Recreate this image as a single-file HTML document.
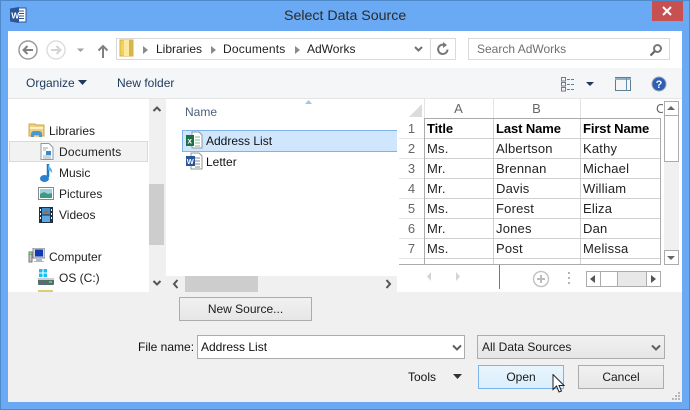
<!DOCTYPE html>
<html><head><meta charset="utf-8"><style>
html,body{margin:0;padding:0}
body{width:690px;height:410px;overflow:hidden;position:relative;background:#6aaaf4;font-family:"Liberation Sans",sans-serif;font-size:12px;color:#1a1a1a}
div,span,svg{position:absolute;box-sizing:border-box}
.t{white-space:nowrap;line-height:16px}
.n{color:#1e1e1e;font-size:12px;letter-spacing:0}
.c{font-size:13px;color:#222;letter-spacing:.2px}
.b{font-weight:bold;color:#000;font-size:13px;letter-spacing:-.1px}
.h{color:#666;font-size:13px;text-align:center}
.g{background:#d0d0d0}
.btn{background:linear-gradient(#f1f1f1,#e6e6e6);border:1px solid #acacac;text-align:center;line-height:22px;letter-spacing:0;color:#1a1a1a}
</style></head><body>
<div style="left:0;top:0;width:690px;height:410px;border:1px solid #4d88c9"></div>
<div class="t" style="left:284px;top:7px;font-size:14.2px;line-height:18px;color:#2a2a2a">Select Data Source</div>
<svg style="left:9px;top:6px" width="18" height="18" viewBox="0 0 18 18"><rect x="7" y="2" width="10" height="14" fill="#fff" stroke="#2a5699" stroke-width="1"/><path d="M10 5h5M10 7.500h5M10 10h5M10 12.500h5" stroke="#2a5699"/><path d="M1 2.500L10 1v16L1 15.500z" fill="#2a5699"/><text x="2.200" y="12.500" font-size="8.500" font-weight="bold" fill="#fff" font-family="Liberation Sans">W</text></svg>
<div style="left:652px;top:1px;width:31px;height:20px;background:#c75050"></div>
<svg style="left:661px;top:5px" width="12" height="12"><path d="M2 2l8 8M10 2l-8 8" stroke="#fff" stroke-width="2"/></svg>

<!-- client -->
<div style="left:8px;top:31px;width:674px;height:371px;background:#f0f0f0"></div>
<div style="left:8px;top:31px;width:674px;height:37px;background:#fff"></div>
<div style="left:8px;top:68px;width:674px;height:30px;background:#f5f6f7"></div>
<div style="left:8px;top:98px;width:674px;height:1px;background:#e4e5e7"></div>

<!-- nav -->
<svg style="left:17px;top:38px" width="106" height="24" viewBox="0 0 106 24" fill="none">
<circle cx="11" cy="12" r="9" stroke="#9a9a9a" stroke-width="1.500"/><path d="M16 12H7M10.500 8L6.500 12l4 4" stroke="#808080" stroke-width="2"/>
<circle cx="39" cy="12" r="9" stroke="#dedede" stroke-width="1.500"/><path d="M34 12h9M39.500 8l4 4-4 4" stroke="#d4d4d4" stroke-width="2"/>
<path d="M60 10.500h7l-3.500 3.500z" fill="#a0a0a0"/>
<path d="M86 20V8M81.500 12.500L86 8l4.500 4.500" stroke="#808080" stroke-width="2"/></svg>
<div style="left:116px;top:38px;width:340px;height:22px;border:1px solid #d9d9d9;background:#fff"></div>
<div style="left:430px;top:38px;width:1px;height:22px;background:#d9d9d9"></div>
<svg style="left:119px;top:39px" width="16" height="19" viewBox="0 0 16 19"><rect x="1" y="1" width="13" height="16" fill="#f0d060" stroke="#d7b040"/><rect x="5" y="1" width="5" height="16" fill="#fbe9a0"/><rect x="10" y="1" width="4" height="16" fill="#d9b44a"/></svg>
<svg style="left:142px;top:44px" width="300" height="12"><path d="M1 2l5 4-5 4zM69 2l5 4-5 4zM153 2l5 4-5 4z" fill="#8a8a8a"/><path d="M273 3l3.500 3.500L280 3" stroke="#707070" stroke-width="2" fill="none"/></svg>
<div class="t n" style="left:156px;top:41px">Libraries</div>
<div class="t n" style="left:223px;top:41px;letter-spacing:.2px">Documents</div>
<div class="t n" style="left:307px;top:41px">AdWorks</div>
<svg style="left:436px;top:42px" width="14" height="14" fill="none"><path d="M11.500 7.500A4.700 4.700 0 1 1 8 2.800" stroke="#777" stroke-width="2"/><path d="M7 0v6l4-3z" fill="#777"/></svg>
<div style="left:468px;top:38px;width:202px;height:22px;border:1px solid #d9d9d9;background:#fff"></div>
<div class="t" style="left:477px;top:41px;color:#707070">Search AdWorks</div>
<svg style="left:649px;top:43px" width="14" height="14" fill="none"><circle cx="8.500" cy="5.500" r="3.500" stroke="#777" stroke-width="2"/><path d="M6 8l-4.500 4.500" stroke="#666" stroke-width="2.200"/></svg>

<!-- toolbar -->
<div class="t" style="left:26px;top:75px;color:#1e395b">Organize</div>
<svg style="left:78px;top:80px" width="10" height="6"><path d="M0 0h9L4.500 5z" fill="#1e395b"/></svg>
<div class="t" style="left:117px;top:75px;color:#1e395b">New folder</div>
<svg style="left:560px;top:76px" width="100" height="18" fill="none">
<rect x="1.500" y="1.500" width="4" height="3.500" stroke="#778"/><rect x="1.500" y="6.500" width="4" height="3.500" stroke="#778"/><rect x="1.500" y="11.500" width="4" height="3.500" stroke="#778"/>
<path d="M7 3.500h8M7 8.500h8M7 13.500h8" stroke="#5d7fa0" stroke-dasharray="3 1"/>
<path d="M26 6h8l-4 4z" fill="#1e395b"/>
<rect x="55.500" y="1.500" width="15" height="13" stroke="#5f7f8f"/><path d="M55 2h16v2H55z" fill="#8fb0c0"/><path d="M66.500 2v13" stroke="#5f8faf"/></svg>
<svg style="left:651px;top:76px" width="16" height="16"><circle cx="8" cy="8" r="7" fill="#2e5fb4" stroke="#9aa5b5"/><text x="8" y="12" text-anchor="middle" font-size="11" font-weight="bold" fill="#fff" font-family="Liberation Sans">?</text></svg>

<!-- nav pane -->
<div style="left:8px;top:99px;width:141px;height:193px;background:#fff"></div>
<div style="left:149px;top:99px;width:15px;height:193px;background:#f0f0f0"></div>
<div style="left:149px;top:184px;width:15px;height:61px;background:#cdcdcd"></div>
<svg style="left:152px;top:105px" width="10" height="183" fill="none"><path d="M1.500 6L5 2.500 8.500 6M1.500 176L5 179.500 8.500 176" stroke="#555" stroke-width="2"/></svg>
<div style="left:9px;top:141px;width:139px;height:21px;background:#f2f2f2;border:1px solid #dadada"></div>
<svg style="left:28px;top:122px" width="17" height="17" viewBox="0 0 17 17"><path d="M1 2h6l1 1h8v11H1z" fill="#f0d080" stroke="#c8a850"/><path d="M2 5h13v2H2z" fill="#fdf2c0"/><path d="M3 15v-3a3 3 0 0 1 3-3h5a3 3 0 0 1 3 3v3h-3v-2H6v2z" fill="#4a9ad0"/></svg>
<div class="t n" style="left:49px;top:123px">Libraries</div>
<svg style="left:40px;top:143px" width="14" height="17" viewBox="0 0 14 17"><path d="M1 .5h8l4 4v12H1z" fill="#fff" stroke="#8a99a8"/><path d="M3 5h5M3 7h3M3 13h8M3 15h8" stroke="#9aa"/><rect x="6" y="8" width="5" height="4" fill="#3a8ac8"/></svg>
<div class="t n" style="left:59px;top:144px;letter-spacing:.2px">Documents</div>
<svg style="left:39px;top:163px" width="15" height="20" viewBox="0 0 15 20"><path d="M9 1v13" stroke="#1e78c8" stroke-width="2.500"/><ellipse cx="5.500" cy="15.500" rx="4.500" ry="3.500" fill="#2a80d0"/><path d="M9 1c1 4 5 4 4 9-1-2-3-3-4-3z" fill="#5ab0e8"/></svg>
<div class="t n" style="left:59px;top:165px">Music</div>
<svg style="left:38px;top:187px" width="16" height="13" viewBox="0 0 16 13"><rect x=".5" y=".5" width="15" height="12" fill="#fff" stroke="#888"/><rect x="2" y="2" width="12" height="9" fill="#9fd0e0"/><path d="M2 7l4-2 4 2 4-1v5H2z" fill="#3f9a80"/></svg>
<div class="t n" style="left:59px;top:186px">Pictures</div>
<svg style="left:39px;top:207px" width="14" height="16" viewBox="0 0 14 16"><rect width="14" height="16" fill="#203040"/><rect x="3" y="1" width="8" height="6.500" fill="#3a90d0"/><rect x="3" y="8.500" width="8" height="6.500" fill="#60a8e0"/><path d="M4 6l3-3 3 3z" fill="#a56a40"/><path d="M1 2h1v2H1zM1 6h1v2H1zM1 10h1v2H1zM12 2h1v2h-1zM12 6h1v2h-1zM12 10h1v2h-1z" fill="#fff"/></svg>
<div class="t n" style="left:59px;top:207px">Videos</div>
<svg style="left:28px;top:248px" width="17" height="16" viewBox="0 0 17 16"><rect x="5" y="0" width="12" height="10" fill="#d0d8e0" stroke="#808890"/><rect x="7" y="1.500" width="8" height="7" fill="#1438b0"/><rect x="1" y="4" width="3" height="10" fill="#c0c8c8" stroke="#777"/><path d="M8 11h6v2h2v1H6v-1h2z" fill="#b0b8c0"/><rect x="1.500" y="6" width="2" height="1" fill="#4c4"/></svg>
<div class="t n" style="left:49px;top:249px">Computer</div>
<svg style="left:38px;top:269px" width="16" height="17" viewBox="0 0 16 17"><path d="M1 0h3.500v3.500H1zM5.500 0H9v3.500H5.500zM1 4.500h3.500V8H1zM5.500 4.500H9V8H5.500z" fill="#14c0f0"/><rect y="10" width="16" height="6" rx="1" fill="#5a6a72"/><rect x="0" y="9" width="16" height="2" fill="#c8d0d0"/><rect x="11" y="12" width="3" height="2" fill="#5c5"/></svg>
<div class="t n" style="left:59px;top:270px">OS (C:)</div>
<div style="left:38px;top:290px;width:15px;height:2px;background:#e8c878"></div>

<!-- file pane -->
<div style="left:166px;top:99px;width:232px;height:193px;background:#fff"></div>
<div style="left:166px;top:276px;width:231px;height:16px;background:#f0f0f0"></div>
<div style="left:185px;top:276px;width:73px;height:16px;background:#cdcdcd"></div>
<svg style="left:171px;top:279px" width="222" height="10" fill="none"><path d="M6.500 1L3 5l3.500 4M215.500 1L219 5l-3.500 4" stroke="#555" stroke-width="2"/></svg>
<svg style="left:305px;top:100px" width="8" height="5"><path d="M0 4h7L3.500 0z" fill="#a5c6e0"/></svg>
<div class="t" style="left:185px;top:104px;color:#4c607a">Name</div>
<div style="left:182px;top:130px;width:215px;height:22px;background:#d0e6fc;border:1px solid #7eb4ea;border-right:0"></div>
<svg style="left:185px;top:131px" width="18" height="18" viewBox="0 0 18 18"><path d="M7 1h7l3 3v13H7z" fill="#fff" stroke="#8a9a9a"/><path d="M10 6h5M10 9h5M10 12h5M10 15h5" stroke="#7ab890"/><path d="M1 4h8v11H1z" fill="#1e7145"/><text x="2.500" y="12.500" font-size="8" font-weight="bold" fill="#fff" font-family="Liberation Sans">x</text></svg>
<div class="t n" style="left:206px;top:133px;color:#111">Address List</div>
<svg style="left:185px;top:152px" width="18" height="18" viewBox="0 0 18 18"><path d="M6 1h8l3 3v13H6z" fill="#fff" stroke="#8a9a9a"/><path d="M10 6h5M10 9h5M10 12h5M10 15h5" stroke="#8a8a8a"/><path d="M1 4h9v10H1z" fill="#2a5699"/><text x="1.800" y="12" font-size="7.500" font-weight="bold" fill="#fff" font-family="Liberation Sans">W</text></svg>
<div class="t n" style="left:206px;top:154px;color:#111">Letter</div>

<!-- preview -->
<div style="left:398px;top:99px;width:284px;height:193px;background:#fff"></div>
<svg style="left:408px;top:103px" width="15" height="15"><path d="M14 1v13H1z" fill="#dcdcdc"/></svg>
<div class="g" style="left:493px;top:99px;width:1px;height:19px;background:#e4e4e4"></div>
<div class="g" style="left:580px;top:99px;width:1px;height:19px;background:#e4e4e4"></div>
<div class="g" style="left:424px;top:99px;width:1px;height:19px;background:#e4e4e4"></div>
<div class="g" style="left:424px;top:118px;width:237px;height:1px;background:#ababab"></div>
<div class="g" style="left:424px;top:118px;width:1px;height:146px;background:#ababab"></div>
<div class="g" style="left:660px;top:118px;width:1px;height:146px;background:#ababab"></div>
<div class="g" style="left:399px;top:264px;width:262px;height:1px;background:#ababab"></div>
<div class="g" style="left:493px;top:119px;width:1px;height:145px"></div>
<div class="g" style="left:580px;top:119px;width:1px;height:145px"></div>
<div class="g" style="left:425px;top:138px;width:235px;height:1px"></div>
<div class="g" style="left:425px;top:158px;width:235px;height:1px"></div>
<div class="g" style="left:425px;top:178px;width:235px;height:1px"></div>
<div class="g" style="left:425px;top:198px;width:235px;height:1px"></div>
<div class="g" style="left:425px;top:218px;width:235px;height:1px"></div>
<div class="g" style="left:425px;top:238px;width:235px;height:1px"></div>
<div class="g" style="left:425px;top:258px;width:235px;height:1px"></div>
<div class="g" style="left:399px;top:138px;width:25px;height:1px;background:#e4e4e4"></div>
<div class="g" style="left:399px;top:158px;width:25px;height:1px;background:#e4e4e4"></div>
<div class="g" style="left:399px;top:178px;width:25px;height:1px;background:#e4e4e4"></div>
<div class="g" style="left:399px;top:198px;width:25px;height:1px;background:#e4e4e4"></div>
<div class="g" style="left:399px;top:218px;width:25px;height:1px;background:#e4e4e4"></div>
<div class="g" style="left:399px;top:238px;width:25px;height:1px;background:#e4e4e4"></div>
<div class="g" style="left:399px;top:258px;width:25px;height:1px;background:#e4e4e4"></div>

<div class="t h" style="left:424px;top:101px;width:69px">A</div>
<div class="t h" style="left:493px;top:101px;width:87px">B</div>
<div class="t h" style="left:656px;top:101px;width:7px;overflow:hidden;text-align:left">C</div>
<div class="t h" style="left:399px;top:121px;width:25px">1</div>
<div class="t h" style="left:399px;top:141px;width:25px">2</div>
<div class="t h" style="left:399px;top:161px;width:25px">3</div>
<div class="t h" style="left:399px;top:181px;width:25px">4</div>
<div class="t h" style="left:399px;top:201px;width:25px">5</div>
<div class="t h" style="left:399px;top:221px;width:25px">6</div>
<div class="t h" style="left:399px;top:241px;width:25px">7</div>

<div class="t b" style="left:427px;top:121px">Title</div>
<div class="t b" style="left:496px;top:121px">Last Name</div>
<div class="t b" style="left:583px;top:121px">First Name</div>
<div class="t c" style="left:427px;top:141px">Ms.</div><div class="t c" style="left:496px;top:141px">Albertson</div><div class="t c" style="left:583px;top:141px">Kathy</div>
<div class="t c" style="left:427px;top:161px">Mr.</div><div class="t c" style="left:496px;top:161px">Brennan</div><div class="t c" style="left:583px;top:161px">Michael</div>
<div class="t c" style="left:427px;top:181px">Mr.</div><div class="t c" style="left:496px;top:181px">Davis</div><div class="t c" style="left:583px;top:181px">William</div>
<div class="t c" style="left:427px;top:201px">Ms.</div><div class="t c" style="left:496px;top:201px">Forest</div><div class="t c" style="left:583px;top:201px">Eliza</div>
<div class="t c" style="left:427px;top:221px">Mr.</div><div class="t c" style="left:496px;top:221px">Jones</div><div class="t c" style="left:583px;top:221px">Dan</div>
<div class="t c" style="left:427px;top:241px">Ms.</div><div class="t c" style="left:496px;top:241px">Post</div><div class="t c" style="left:583px;top:241px">Melissa</div>

<!-- sheet scrollbars -->
<div style="left:664px;top:101px;width:15px;height:164px;background:#f0f0f0"></div>
<div style="left:664px;top:101px;width:15px;height:15px;background:#fff;border:1px solid #ababab"></div>
<div style="left:664px;top:116px;width:15px;height:46px;background:#fff;border:1px solid #ababab;border-top:0"></div>
<div style="left:664px;top:250px;width:15px;height:15px;background:#fff;border:1px solid #ababab"></div>
<svg style="left:667px;top:106px" width="9" height="5"><path d="M0 4h8L4 0z" fill="#666"/></svg>
<svg style="left:667px;top:256px" width="9" height="5"><path d="M0 0h8L4 4z" fill="#666"/></svg>
<svg style="left:425px;top:271px" width="40" height="12"><path d="M6 1v9L2 5.500zM31 1v9l4-4.500z" fill="#d4d4d4"/></svg>
<div style="left:499px;top:265px;width:1px;height:24px;background:#777"></div>
<svg style="left:532px;top:270px" width="18" height="18" fill="none"><circle cx="9" cy="9" r="7.500" stroke="#c4c4c4" stroke-width="1.500"/><path d="M9 5v8M5 9h8" stroke="#bbb" stroke-width="2"/></svg>
<svg style="left:568px;top:272px" width="3" height="14"><path d="M0 0h2v2H0zM0 5h2v2H0zM0 10h2v2H0z" fill="#b4b4b4"/></svg>
<div style="left:586px;top:271px;width:75px;height:16px;background:#e8e8e8;border:1px solid #ababab"></div>
<div style="left:586px;top:271px;width:15px;height:16px;background:#fff;border:1px solid #ababab"></div>
<div style="left:601px;top:271px;width:17px;height:16px;background:#fff;border:1px solid #ababab;border-left:0"></div>
<div style="left:646px;top:271px;width:15px;height:16px;background:#fff;border:1px solid #ababab"></div>
<svg style="left:590px;top:275px" width="6" height="9"><path d="M5 0v8L0 4z" fill="#555"/></svg>
<svg style="left:651px;top:275px" width="6" height="9"><path d="M0 0v8l5-4z" fill="#555"/></svg>

<!-- bottom -->
<div class="btn" style="left:179px;top:297px;width:133px;height:24px">New Source...</div>
<div class="t n" style="left:138px;top:339px;color:#111">File name:</div>
<div class="t n" style="left:201px;top:339px;z-index:2;color:#111">Address List</div>
<div style="left:197px;top:335px;width:268px;height:24px;background:#fff;border:1px solid #acacac"></div>
<svg style="left:452px;top:344px;z-index:2" width="10" height="8" fill="none"><path d="M1 1.500l4 4 4-4" stroke="#606060" stroke-width="2"/></svg>
<div class="btn" style="left:477px;top:335px;width:188px;height:24px;text-align:left;padding-left:4px;z-index:1">All Data Sources</div>
<svg style="left:651px;top:344px;z-index:2" width="10" height="8" fill="none"><path d="M1 1.500l4 4 4-4" stroke="#606060" stroke-width="2"/></svg>
<div class="t n" style="left:408px;top:369px;color:#111">Tools</div>
<svg style="left:453px;top:374px" width="10" height="6"><path d="M0 0h9L4.500 5z" fill="#333"/></svg>
<div class="btn" style="left:478px;top:365px;width:86px;height:24px;background:linear-gradient(#eaf5fd,#d9eefc);border-color:#7eb4ea">Open</div>
<div class="btn" style="left:578px;top:365px;width:86px;height:24px">Cancel</div>
<svg style="left:552px;top:374px;z-index:3" width="14" height="20" viewBox="0 0 14 20"><path d="M1 0.500v15l3.500-3.500 2.500 6 2.500-1-2.500-5.500h5z" fill="#fff" stroke="#222" stroke-width="1"/></svg>
<svg style="left:671px;top:391px" width="10" height="10"><path d="M7 1h2v2H7zM4 4h2v2H4zM7 4h2v2H7zM1 7h2v2H1zM4 7h2v2H4zM7 7h2v2H7z" fill="#b8b8b8"/></svg>
</body></html>
